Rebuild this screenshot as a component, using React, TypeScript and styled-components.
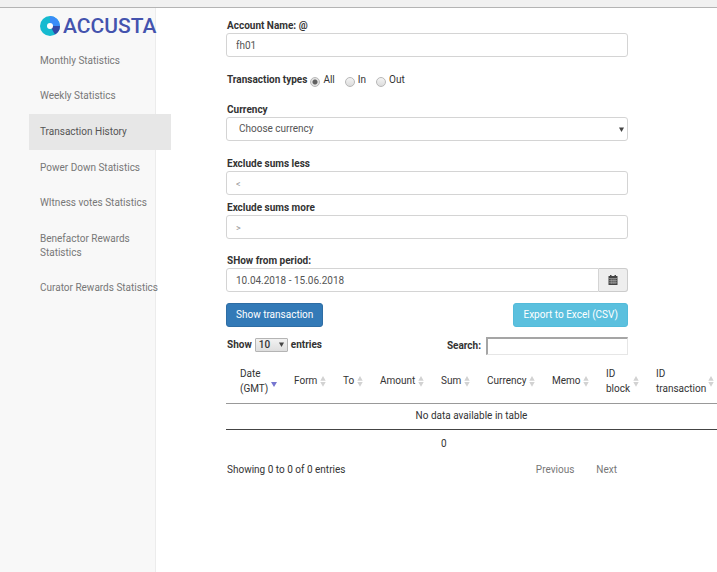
import React, { useState } from 'react';
import styled, { createGlobalStyle } from 'styled-components';

const GlobalStyle = createGlobalStyle`
  *, *::before, *::after { box-sizing: border-box; }
  body {
    margin: 0;
    background: #fff;
    color: #333;
    font: 10px/14px Roboto, "Liberation Sans", sans-serif;
    overflow-x: hidden;
  }
  button, input, select { font: inherit; color: inherit; margin: 0; }
`;

const Page = styled.div`
  display: flex;
  flex-direction: column;
  min-height: 100vh;
`;

const TopBar = styled.header`
  height: 8px;
  background: #f1f1f1;
  border-bottom: 1px solid #b4b4b4;
`;

const Body = styled.div`
  display: flex;
  flex: 1;
`;

const Sidebar = styled.aside`
  flex: none;
  width: 156px;
  padding: 7px 0 0 29px;
  background: #f8f8f8;
  border-right: 1px solid #ececec;
`;

const Logo = styled.a`
  display: flex;
  align-items: center;
  gap: 3px;
  height: 22px;
  padding-left: 11px;
  color: #4453ae;
  font-size: 21px;
  font-weight: 500;
  line-height: 22px;
  text-decoration: none;
  white-space: nowrap;
  svg { flex: none; }
`;

const Nav = styled.nav`
  display: flex;
  flex-direction: column;
  height: 263px;
  margin: 6px -16px 0 0;
`;

const NavLink = styled.a<{ $active?: boolean }>`
  display: flex;
  flex: 1 0 auto;
  align-items: center;
  padding: 10px 13px 10px 11px;
  background: ${p => (p.$active ? '#e7e7e7' : 'transparent')};
  color: ${p => (p.$active ? '#555' : '#777')};
  text-decoration: none;
`;

const Main = styled.main`
  flex: 1;
  min-width: 0;
  padding: 11px 0 24px 70px;
`;

const Form = styled.form`
  max-width: 402px;
`;

const Field = styled.div<{ $gap: number }>`
  margin-bottom: ${p => p.$gap}px;
`;

const Label = styled.label`
  display: block;
  padding-left: 1px;
  font-weight: 700;
`;

const TextInput = styled.input`
  display: block;
  width: 100%;
  height: 24px;
  padding: 0 9px;
  border: 1px solid #d4d4d4;
  border-radius: 3px;
  background: #fff;
  color: #555;
  outline: none;
  &::placeholder { color: #999; opacity: 1; font-size: 9px; }
`;

const SelectWrap = styled.div`
  display: grid;
  align-items: center;
  > * { grid-area: 1 / 1; }
  > svg { justify-self: end; margin-right: 4px; pointer-events: none; }
`;

const CurrencySelect = styled.select`
  width: 100%;
  height: 24px;
  padding: 0 20px 0 12px;
  border: 1px solid #d4d4d4;
  border-radius: 3px;
  background: #fff;
  color: #555;
  appearance: none;
`;

const RadioGroup = styled.fieldset`
  display: flex;
  align-items: center;
  min-width: 0;
  margin: 0 0 16px;
  padding: 0 0 0 1px;
  border: 0;
`;

const RadioTitle = styled.span`
  margin-right: 3px;
  font-weight: 700;
`;

const RadioLabel = styled.label`
  display: flex;
  align-items: center;
  gap: 3px;
  margin-right: 10px;
`;

const Radio = styled.input`
  width: 10px;
  height: 10px;
  margin-top: 3px;
  border: 1px solid #b8b8b8;
  border-radius: 50%;
  background: linear-gradient(#f4f4f4, #dcdcdc);
  appearance: none;
  &:checked {
    background: radial-gradient(circle, #606060 0 2px, #e2e2e2 3px);
  }
`;

const DateGroup = styled.div`
  display: flex;
`;

const DateInput = styled(TextInput)`
  flex: 1;
  min-width: 0;
  border-radius: 3px 0 0 3px;
`;

const CalendarButton = styled.button`
  display: flex;
  align-items: center;
  justify-content: center;
  width: 29px;
  height: 24px;
  padding: 0;
  border: 1px solid #ccc;
  border-left: 0;
  border-radius: 0 3px 3px 0;
  background: #eee;
`;

const Spread = styled.div`
  display: flex;
  justify-content: space-between;
`;

const ActionButton = styled.button<{ $tone: 'primary' | 'info' }>`
  height: 24px;
  padding: 0 9px;
  border: 1px solid ${p => (p.$tone === 'primary' ? '#2e6da4' : '#53bbda')};
  border-radius: 3px;
  background: ${p => (p.$tone === 'primary' ? '#337ab7' : '#5bc0de')};
  color: #fff;
`;

const TableTools = styled(Spread)`
  max-width: 402px;
  margin-top: 10px;
  padding-left: 1px;
`;

const LengthLabel = styled.label`
  display: flex;
  align-items: center;
  gap: 3px;
  height: 15px;
  font-weight: 700;
`;

const LengthSelect = styled.select`
  width: 33px;
  height: 14px;
  padding: 0 3px;
  border: 1px solid #b4b4b4;
  border-radius: 1px;
  background: linear-gradient(#f2f2f2, #dedede);
  line-height: 12px;
  font-weight: 500;
  appearance: none;
`;

const SearchLabel = styled.label`
  display: flex;
  align-items: center;
  gap: 5px;
  font-weight: 700;
`;

const SearchInput = styled.input`
  width: 142px;
  height: 18px;
  padding: 0 4px;
  border: 1px solid #e6e6e6;
  border-top: 2px solid #a5a5a5;
  border-left: 2px solid #a5a5a5;
  background: #fff;
  font-weight: 400;
  outline: none;
`;

const Table = styled.table`
  width: 100%;
  margin-top: 7px;
  border-collapse: collapse;
  table-layout: fixed;
`;

const HeadCell = styled.th<{ $width: number }>`
  width: ${p => p.$width}px;
  height: 41px;
  padding: 0 3px 3px 14px;
  border-bottom: 1px solid #999;
  font-weight: 400;
`;

const SortButton = styled.button`
  display: flex;
  align-items: center;
  justify-content: space-between;
  width: 100%;
  padding: 0;
  border: 0;
  background: none;
  line-height: 15px;
  text-align: left;
  svg { flex: none; }
`;

const EmptyCell = styled.td`
  height: 26px;
  padding: 0;
  border-bottom: 1px solid #444;
  text-align: center;
`;

const FootCell = styled.td`
  height: 29px;
  padding: 0 0 0 14px;
`;

const Footer = styled(Spread)`
  max-width: 402px;
  margin-top: 5px;
  padding-left: 1px;
`;

const Pager = styled.nav`
  display: flex;
  gap: 22px;
  padding-right: 11px;
`;

const PageButton = styled.button`
  padding: 0;
  border: 0;
  background: none;
  color: #777;
`;

const LogoMark = () => (
  <svg width="20" height="20" viewBox="0 0 20 20" aria-hidden="true">
    <circle cx="10" cy="10" r="10" fill="#16bad0" />
    <path d="M10 0A10 10 0 0 1 20 10L10 10Z" fill="#3b8cf8" />
    <path d="M20 10A10 10 0 0 1 15 18.6L10 10Z" fill="#3348a8" />
    <circle cx="10" cy="10" r="3" fill="#fff" />
  </svg>
);

const Caret = () => (
  <svg width="5" height="5" viewBox="0 0 5 5" aria-hidden="true">
    <path d="M0 0.5H5L2.5 5Z" fill="#444" />
  </svg>
);

const CalendarIcon = () => (
  <svg width="10" height="10" viewBox="0 0 10 10" aria-hidden="true">
    <path d="M0.5 1H2V0H3.5V1H6.5V0H8V1H9.5V10H0.5Z" fill="#444" />
    <path d="M1 3.5H9M1 5.7H9M1 7.8H9M3.2 4V9M5.1 4V9M7 4V9" stroke="#ccc" strokeWidth="0.5" />
  </svg>
);

const SortIcon = ({ active }: { active?: boolean }) =>
  active ? (
    <svg width="6" height="14" viewBox="0 0 6 14" aria-hidden="true">
      <path d="M0 8H6L3 13Z" fill="#7676d0" />
    </svg>
  ) : (
    <svg width="6" height="14" viewBox="0 0 6 14" aria-hidden="true">
      <path d="M0.3 6.8L3 2L5.7 6.8ZM0.3 8H5.7L3 12.8Z" fill="#d2d2d2" />
    </svg>
  );

const links = [
  'Monthly Statistics',
  'Weekly Statistics',
  'Transaction History',
  'Power Down Statistics',
  'WItness votes Statistics',
  'Benefactor Rewards Statistics',
  'Curator Rewards Statistics',
];

const columns: [string, number][] = [
  ['Date (GMT)', 54],
  ['Form', 49],
  ['To', 37],
  ['Amount', 61],
  ['Sum', 46],
  ['Currency', 65],
  ['Memo', 54],
  ['ID block', 50],
  ['ID transaction', 75],
];

export default function App() {
  const [type, setType] = useState('All');
  return (
    <Page>
      <GlobalStyle />
      <TopBar />
      <Body>
        <Sidebar>
          <Logo href="#"><LogoMark />ACCUSTA</Logo>
          <Nav>
            {links.map(text => (
              <NavLink key={text} href="#" $active={text === 'Transaction History'}>{text}</NavLink>
            ))}
          </Nav>
        </Sidebar>
        <Main>
          <Form onSubmit={e => e.preventDefault()}>
            <Field $gap={16}>
              <Label htmlFor="account">Account Name: @</Label>
              <TextInput id="account" defaultValue="fh01" />
            </Field>
            <RadioGroup aria-labelledby="types">
              <RadioTitle id="types">Transaction types</RadioTitle>
              {['All', 'In', 'Out'].map(t => (
                <RadioLabel key={t}>
                  <Radio type="radio" name="type" checked={type === t} onChange={() => setType(t)} />
                  {t}
                </RadioLabel>
              ))}
            </RadioGroup>
            <Field $gap={16}>
              <Label htmlFor="currency">Currency</Label>
              <SelectWrap>
                <CurrencySelect id="currency"><option>Choose currency</option></CurrencySelect>
                <Caret />
              </SelectWrap>
            </Field>
            <Field $gap={6}>
              <Label htmlFor="less">Exclude sums less</Label>
              <TextInput id="less" placeholder="<" />
            </Field>
            <Field $gap={15}>
              <Label htmlFor="more">Exclude sums more</Label>
              <TextInput id="more" placeholder=">" />
            </Field>
            <Field $gap={11}>
              <Label htmlFor="period">SHow from period:</Label>
              <DateGroup>
                <DateInput id="period" defaultValue="10.04.2018 - 15.06.2018" />
                <CalendarButton type="button" aria-label="Choose dates"><CalendarIcon /></CalendarButton>
              </DateGroup>
            </Field>
            <Spread>
              <ActionButton $tone="primary">Show transaction</ActionButton>
              <ActionButton $tone="info" type="button">Export to Excel (CSV)</ActionButton>
            </Spread>
          </Form>
          <TableTools>
            <LengthLabel>
              Show
              <SelectWrap>
                <LengthSelect><option>10</option></LengthSelect>
                <Caret />
              </SelectWrap>
              entries
            </LengthLabel>
            <SearchLabel>Search:<SearchInput type="search" /></SearchLabel>
          </TableTools>
          <Table>
            <thead>
              <tr>
                {columns.map(([name, width], i) => (
                  <HeadCell key={name} $width={width} scope="col">
                    <SortButton>{name}<SortIcon active={i === 0} /></SortButton>
                  </HeadCell>
                ))}
              </tr>
            </thead>
            <tbody>
              <tr><EmptyCell colSpan={9}>No data available in table</EmptyCell></tr>
            </tbody>
            <tfoot>
              <tr>
                {columns.map(([name]) => <FootCell key={name}>{name === 'Sum' ? '0' : ''}</FootCell>)}
              </tr>
            </tfoot>
          </Table>
          <Footer>
            <span>Showing 0 to 0 of 0 entries</span>
            <Pager aria-label="Pages">
              <PageButton>Previous</PageButton>
              <PageButton>Next</PageButton>
            </Pager>
          </Footer>
        </Main>
      </Body>
    </Page>
  );
}
